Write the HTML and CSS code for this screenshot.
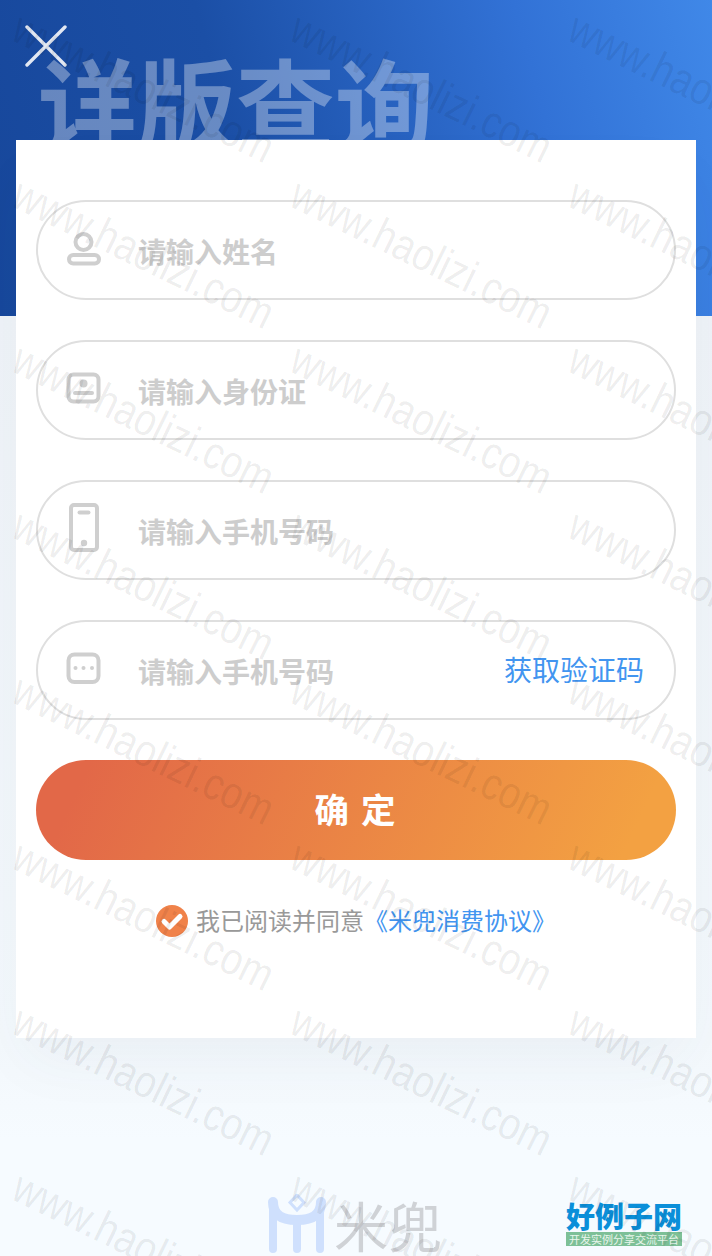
FILE: index.html
```html
<!DOCTYPE html>
<html lang="zh-CN">
<head>
<meta charset="utf-8">
<title>详版查询</title>
<link rel="stylesheet" href="styles.css">
</head>
<body>
<div class="page">
  <header class="hero">
    <svg class="close" width="42" height="42" viewBox="0 0 42 42"><path d="M2 2 40 40M40 2 2 40"/></svg>
    <h1 class="hero-title">详版查询</h1>
  </header>
  <main class="card">
    <div class="field">
      <svg class="ficon" width="36" height="36" viewBox="0 0 36 36"><circle cx="17.500" cy="10" r="8"/><rect x="3" y="23" width="30" height="8.500" rx="4.250"/></svg>
      <span class="ph">请输入姓名</span>
    </div>
    <div class="field">
      <svg class="ficon" width="36" height="36" viewBox="0 0 36 36"><rect x="2.500" y="2.500" width="30" height="27" rx="5"/><circle class="fill" cx="17.500" cy="11.500" r="4"/><path d="M9 21H26"/></svg>
      <span class="ph">请输入身份证</span>
    </div>
    <div class="field">
      <svg class="ficon phone" width="36" height="52" viewBox="0 0 36 52"><rect x="5" y="2" width="26" height="45" rx="3"/><path d="M13.500 9.500H22.500"/><circle class="fill" cx="18" cy="40" r="3.200"/></svg>
      <span class="ph">请输入手机号码</span>
    </div>
    <div class="field">
      <svg class="ficon" width="36" height="36" viewBox="0 0 36 36"><rect x="2.500" y="2.500" width="30" height="27.500" rx="6"/><circle class="fill" cx="9.500" cy="16" r="2"/><circle class="fill" cx="17.500" cy="16" r="2"/><circle class="fill" cx="26" cy="16" r="2"/></svg>
      <span class="ph">请输入手机号码</span>
      <span class="code">获取验证码</span>
    </div>
    <button class="submit" type="button">确 定</button>
    <div class="agree">
      <svg width="32" height="32" viewBox="0 0 32 32"><circle cx="16" cy="16" r="16" fill="#f0824a"/><path d="M8 16.500 13.500 22 24 11.500" fill="none" stroke="#fff" stroke-width="5" stroke-linecap="round" stroke-linejoin="round"/></svg>
      <span class="agree-text">我已阅读并同意<a class="agree-link">《米兜消费协议》</a></span>
    </div>
  </main>
  <footer class="foot">
    <svg class="mark" width="60" height="60" viewBox="0 0 60 60"><path d="M5 8C5 22 15 26 29 26C43 26 53 22 53 8" fill="none" stroke="#cfe0fd" stroke-width="10" stroke-linecap="round"/><path d="M5 14V55M29 30V55M52 14V55" fill="none" stroke="#cfe0fd" stroke-width="8" stroke-linecap="round"/><path d="M29 1 36 8.500 29 16 22 8.500Z" fill="none" stroke="#cfe0fd" stroke-width="3"/></svg>
    <span class="brand">米兜</span>
  </footer>
  <div class="badge">
    <span class="badge-name">好例子网</span>
    <span class="badge-sub">开发实例分享交流平台</span>
  </div>
  <div class="wm" aria-hidden="true">
    <span>www.haolizi.com</span><span>www.haolizi.com</span><span>www.haolizi.com</span>
    <span>www.haolizi.com</span><span>www.haolizi.com</span><span>www.haolizi.com</span>
    <span>www.haolizi.com</span><span>www.haolizi.com</span><span>www.haolizi.com</span>
    <span>www.haolizi.com</span><span>www.haolizi.com</span><span>www.haolizi.com</span>
    <span>www.haolizi.com</span><span>www.haolizi.com</span><span>www.haolizi.com</span>
    <span>www.haolizi.com</span><span>www.haolizi.com</span><span>www.haolizi.com</span>
    <span>www.haolizi.com</span><span>www.haolizi.com</span><span>www.haolizi.com</span>
    <span>www.haolizi.com</span><span>www.haolizi.com</span><span>www.haolizi.com</span>
  </div>
</div>
</body>
</html>
```
FILE: styles.css
```css
* { box-sizing: border-box; }
html, body { margin: 0; padding: 0; }
body {
  font-family: "Noto Sans CJK SC", "Noto Sans", sans-serif;
  background: #f6fbff;
}
.page {
  position: relative;
  width: 712px;
  height: 1256px;
  overflow: hidden;
  background: linear-gradient(180deg, #eef2f7 316px, #f3f8fc 1040px, #f6fbff 1140px);
}
.hero {
  height: 316px;
  padding: 25px 0 0 25px;
  background: linear-gradient(75deg, #17479b 0%, #1b4fa6 35%, #3272d6 75%, #4088e8 100%);
}
.close { display: block; }
.close path { fill: none; stroke: #e2e8f3; stroke-width: 3.400; stroke-linecap: round; }
.hero-title {
  margin: -27px 0 0 13px;
  font-size: 99px;
  line-height: 120px;
  font-weight: 700;
  color: rgba(255, 255, 255, .34);
  white-space: nowrap;
}
.card {
  margin: -176px 16px 0;
  height: 898px;
  padding: 60px 20px 0;
  background: #fff;
  position: relative;
  display: flex;
  flex-direction: column;
  gap: 40px;
  box-shadow: 0 30px 60px -10px rgba(60, 70, 90, .05);
}
.field {
  height: 100px;
  border: 2px solid #dfdfdf;
  border-radius: 50px;
  display: flex;
  align-items: center;
  padding: 0 30px 0 28px;
}
.ficon { flex: none; margin-right: 36px; }
.ficon.phone { margin-top: -2px; }
.ficon rect, .ficon circle, .ficon path { fill: none; stroke: #cfcfcf; stroke-width: 4; }
.ficon .fill { fill: #cfcfcf; stroke: none; }
.ficon path { stroke-linecap: round; }
.ph {
  font-size: 28px;
  line-height: 40px;
  font-weight: 700;
  color: #cdcdcd;
  margin-top: 2px;
}
.code {
  margin-left: auto;
  font-size: 28px;
  line-height: 40px;
  color: #4295f0;
  margin-top: -2px;
}
.submit {
  height: 100px;
  border: 0;
  border-radius: 50px;
  background: linear-gradient(115deg, #e26848 8%, #f3a142 92%);
  color: #fff;
  font: 700 34.500px/96px "Noto Sans CJK SC", sans-serif;
  letter-spacing: 2px;
  padding: 0 0 4px;
}
.agree {
  display: flex;
  justify-content: center;
  align-items: center;
  gap: 8px;
  margin-top: 5px;
}
.agree-text { font-size: 24px; line-height: 32px; color: #999; white-space: nowrap; margin-top: -3px; }
.agree-link { color: #4295f0; }
.foot {
  margin-top: 155px;
  margin-left: 268px;
  display: flex;
  align-items: center;
  gap: 6px;
}
.mark { flex: none; }
.brand {
  font-size: 54px;
  line-height: 60px;
  font-weight: 400;
  color: #cfd2d6;
  margin-top: 2px;
}
.badge {
  position: absolute;
  left: 566px;
  top: 1200px;
  width: 116px;
  display: flex;
  flex-direction: column;
}
.badge-name {
  height: 32px;
  font-size: 29px;
  line-height: 31px;
  font-weight: 900;
  color: #0b8fd9;
  white-space: nowrap;
}
.badge-sub {
  height: 14px;
  background: #7dc097;
  color: #e8f6ec;
  font-size: 11px;
  line-height: 14px;
  white-space: nowrap;
  text-align: center;
  overflow: hidden;
}
.wm {
  position: absolute;
  inset: 0;
  pointer-events: none;
  overflow: hidden;
  display: grid;
  grid-template-columns: repeat(3, 278px);
  grid-auto-rows: 165.500px;
  padding: 4px 0 0 26px;
  width: 1000px;
}
.wm span {
  display: block;
  width: 300px;
  transform-origin: 0 0;
  transform: rotate(26deg) scale(1, 1.180);
  font-family: "Liberation Sans", sans-serif;
  font-size: 38.500px;
  line-height: 40px;
  color: rgba(0, 0, 0, .075);
  white-space: nowrap;
}
```
